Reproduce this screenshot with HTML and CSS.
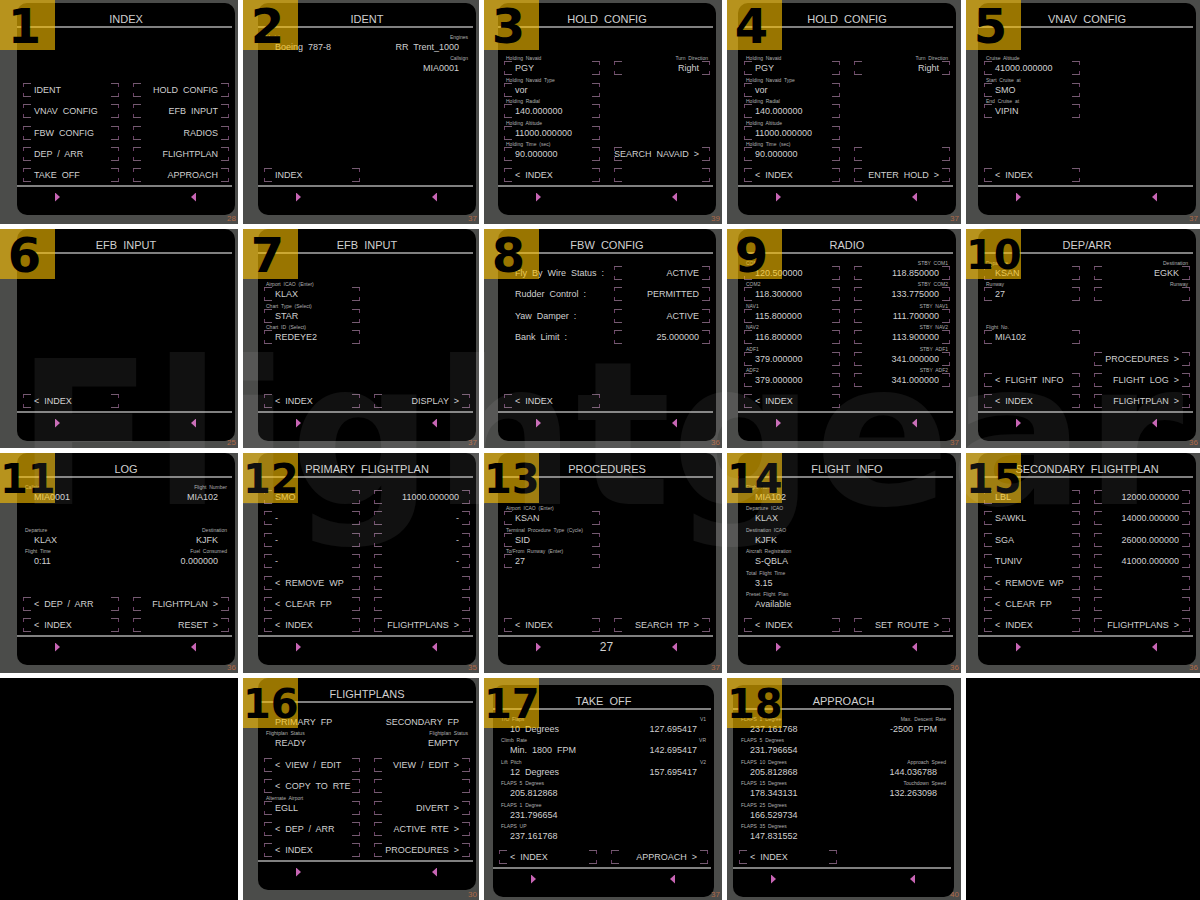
FILE: index.html
```html
<!DOCTYPE html>
<html lang="en">
<head>
<meta charset="utf-8">
<meta name="viewport" content="width=device-width, initial-scale=1">
<title>Flight computer pages</title>
<link rel="stylesheet" href="styles.css">
</head>
<body>
<main class="sheet">

<section class="tile"><span class="badge">1</span><div class="screen"><h2 class="title">INDEX</h2><div class="rows">
<button class="key r3">IDENT</button><button class="key right r3">HOLD  CONFIG</button>
<button class="key r4">VNAV  CONFIG</button><button class="key right r4">EFB  INPUT</button>
<button class="key r5">FBW  CONFIG</button><button class="key right r5">RADIOS</button>
<button class="key r6">DEP  /  ARR</button><button class="key right r6">FLIGHTPLAN</button>
<button class="key r7">TAKE  OFF</button><button class="key right r7">APPROACH</button>
</div><div class="foot"><i class="next"></i><span></span><i class="prev"></i></div></div><span class="rate">28</span></section>

<section class="tile"><span class="badge">2</span><div class="screen"><h2 class="title">IDENT</h2><div class="rows">
<p class="cell r1"><small>Model</small>Boeing  787-8</p><p class="cell right r1"><small>Engines</small>RR  Trent_1000</p>
<p class="cell right r2"><small>Callsign</small>MIA0001</p>
<button class="key r7">INDEX</button>
</div><div class="foot"><i class="next"></i><span></span><i class="prev"></i></div></div><span class="rate">37</span></section>

<section class="tile"><span class="badge">3</span><div class="screen"><h2 class="title">HOLD  CONFIG</h2><div class="rows">
<button class="key r2"><small>Holding  Navaid</small>PGY</button><button class="key right r2"><small>Turn  Direction</small>Right</button>
<button class="key r3"><small>Holding  Navaid  Type</small>vor</button>
<button class="key r4"><small>Holding  Radial</small>140.000000</button>
<button class="key r5"><small>Holding  Altitude</small>11000.000000</button>
<button class="key r6"><small>Holding  Time  (sec)</small>90.000000</button><button class="key right r6">SEARCH  NAVAID  &gt;</button>
<button class="key r7">&lt;  INDEX</button><span class="key right r7"></span>
</div><div class="foot"><i class="next"></i><span></span><i class="prev"></i></div></div><span class="rate">39</span></section>

<section class="tile"><span class="badge">4</span><div class="screen"><h2 class="title">HOLD  CONFIG</h2><div class="rows">
<button class="key r2"><small>Holding  Navaid</small>PGY</button><button class="key right r2"><small>Turn  Direction</small>Right</button>
<button class="key r3"><small>Holding  Navaid  Type</small>vor</button>
<button class="key r4"><small>Holding  Radial</small>140.000000</button>
<button class="key r5"><small>Holding  Altitude</small>11000.000000</button>
<button class="key r6"><small>Holding  Time  (sec)</small>90.000000</button><span class="key right r6"></span>
<button class="key r7">&lt;  INDEX</button><button class="key right r7">ENTER  HOLD  &gt;</button>
</div><div class="foot"><i class="next"></i><span></span><i class="prev"></i></div></div><span class="rate">37</span></section>

<section class="tile"><span class="badge">5</span><div class="screen"><h2 class="title">VNAV  CONFIG</h2><div class="rows">
<button class="key r2"><small>Cruise  Altitude</small>41000.000000</button>
<button class="key r3"><small>Start  Cruise  at</small>SMO</button>
<button class="key r4"><small>End  Cruise  at</small>VIPIN</button>
<button class="key r7">&lt;  INDEX</button>
</div><div class="foot"><i class="next"></i><span></span><i class="prev"></i></div></div><span class="rate">37</span></section>

<section class="tile"><span class="badge">6</span><div class="screen"><h2 class="title">EFB  INPUT</h2><div class="rows">
<button class="key r7">&lt;  INDEX</button>
</div><div class="foot"><i class="next"></i><span></span><i class="prev"></i></div></div><span class="rate">25</span></section>

<section class="tile"><span class="badge">7</span><div class="screen"><h2 class="title">EFB  INPUT</h2><div class="rows">
<button class="key r2"><small>Airport  ICAO  (Enter)</small>KLAX</button>
<button class="key r3"><small>Chart  Type  (Select)</small>STAR</button>
<button class="key r4"><small>Chart  ID  (Select)</small>REDEYE2</button>
<button class="key r7">&lt;  INDEX</button><button class="key right r7">DISPLAY  &gt;</button>
</div><div class="foot"><i class="next"></i><span></span><i class="prev"></i></div></div><span class="rate">37</span></section>

<section class="tile"><span class="badge">8</span><div class="screen"><h2 class="title">FBW  CONFIG</h2><div class="rows">
<p class="cell r1">Fly  By  Wire  Status  :</p><button class="key right r1">ACTIVE</button>
<p class="cell r2">Rudder  Control  :</p><button class="key right r2">PERMITTED</button>
<p class="cell r3">Yaw  Damper  :</p><button class="key right r3">ACTIVE</button>
<p class="cell r4">Bank  Limit  :</p><button class="key right r4">25.000000</button>
<button class="key r7">&lt;  INDEX</button>
</div><div class="foot"><i class="next"></i><span></span><i class="prev"></i></div></div><span class="rate">36</span></section>

<section class="tile"><span class="badge">9</span><div class="screen"><h2 class="title">RADIO</h2><div class="rows">
<button class="key r1"><small>COM1</small>120.500000</button><button class="key right r1"><small>STBY  COM1</small>118.850000</button>
<button class="key r2"><small>COM2</small>118.300000</button><button class="key right r2"><small>STBY  COM2</small>133.775000</button>
<button class="key r3"><small>NAV1</small>115.800000</button><button class="key right r3"><small>STBY  NAV1</small>111.700000</button>
<button class="key r4"><small>NAV2</small>116.800000</button><button class="key right r4"><small>STBY  NAV2</small>113.900000</button>
<button class="key r5"><small>ADF1</small>379.000000</button><button class="key right r5"><small>STBY  ADF1</small>341.000000</button>
<button class="key r6"><small>ADF2</small>379.000000</button><button class="key right r6"><small>STBY  ADF2</small>341.000000</button>
<button class="key r7">&lt;  INDEX</button>
</div><div class="foot"><i class="next"></i><span></span><i class="prev"></i></div></div><span class="rate">37</span></section>

<section class="tile"><span class="badge two">10</span><div class="screen"><h2 class="title">DEP/ARR</h2><div class="rows">
<button class="key r1"><small>Departure</small>KSAN</button><button class="key right r1"><small>Destination</small>EGKK</button>
<button class="key r2"><small>Runway</small>27</button><button class="key right r2"><small>Runway</small></button>
<button class="key r4"><small>Flight  No.</small>MIA102</button>
<button class="key right r5">PROCEDURES  &gt;</button>
<button class="key r6">&lt;  FLIGHT  INFO</button><button class="key right r6">FLIGHT  LOG  &gt;</button>
<button class="key r7">&lt;  INDEX</button><button class="key right r7">FLIGHTPLAN  &gt;</button>
</div><div class="foot"><i class="next"></i><span></span><i class="prev"></i></div></div><span class="rate">36</span></section>

<section class="tile"><span class="badge two">11</span><div class="screen"><h2 class="title">LOG</h2><div class="rows">
<p class="cell r1"><small>Callsign</small>MIA0001</p><p class="cell right r1"><small>Flight  Number</small>MIA102</p>
<p class="cell r3"><small>Departure</small>KLAX</p><p class="cell right r3"><small>Destination</small>KJFK</p>
<p class="cell r4"><small>Flight  Time</small>0:11</p><p class="cell right r4"><small>Fuel  Consumed</small>0.000000</p>
<button class="key r6">&lt;  DEP  /  ARR</button><button class="key right r6">FLIGHTPLAN  &gt;</button>
<button class="key r7">&lt;  INDEX</button><button class="key right r7">RESET  &gt;</button>
</div><div class="foot"><i class="next"></i><span></span><i class="prev"></i></div></div><span class="rate">36</span></section>

<section class="tile"><span class="badge two">12</span><div class="screen"><h2 class="title">PRIMARY  FLIGHTPLAN</h2><div class="rows">
<button class="key r1">SMO</button><button class="key right r1">11000.000000</button>
<button class="key r2">-</button><button class="key right r2">-</button>
<button class="key r3">-</button><button class="key right r3">-</button>
<button class="key r4">-</button><button class="key right r4">-</button>
<button class="key r5">&lt;  REMOVE  WP</button><span class="key right r5"></span>
<button class="key r6">&lt;  CLEAR  FP</button><span class="key right r6"></span>
<button class="key r7">&lt;  INDEX</button><button class="key right r7">FLIGHTPLANS  &gt;</button>
</div><div class="foot"><i class="next"></i><span></span><i class="prev"></i></div></div><span class="rate">35</span></section>

<section class="tile"><span class="badge two">13</span><div class="screen"><h2 class="title">PROCEDURES</h2><div class="rows">
<button class="key r2"><small>Airport  ICAO  (Enter)</small>KSAN</button>
<button class="key r3"><small>Terminal  Procedure  Type  (Cycle)</small>SID</button>
<button class="key r4"><small>To/From  Runway  (Enter)</small>27</button>
<button class="key r7">&lt;  INDEX</button><button class="key right r7">SEARCH  TP  &gt;</button>
</div><div class="foot"><i class="next"></i><span>27</span><i class="prev"></i></div></div><span class="rate">37</span></section>

<section class="tile"><span class="badge two">14</span><div class="screen"><h2 class="title">FLIGHT  INFO</h2><div class="rows">
<p class="cell r1"><small>Flight  Number</small>MIA102</p>
<p class="cell r2"><small>Departure  ICAO</small>KLAX</p>
<p class="cell r3"><small>Destination  ICAO</small>KJFK</p>
<p class="cell r4"><small>Aircraft  Registration</small>S-QBLA</p>
<p class="cell r5"><small>Total  Flight  Time</small>3.15</p>
<p class="cell r6"><small>Preset  Flight  Plan</small>Available</p>
<button class="key r7">&lt;  INDEX</button><button class="key right r7">SET  ROUTE  &gt;</button>
</div><div class="foot"><i class="next"></i><span></span><i class="prev"></i></div></div><span class="rate">36</span></section>

<section class="tile"><span class="badge two">15</span><div class="screen"><h2 class="title">SECONDARY  FLIGHTPLAN</h2><div class="rows">
<button class="key r1">LBL</button><button class="key right r1">12000.000000</button>
<button class="key r2">SAWKL</button><button class="key right r2">14000.000000</button>
<button class="key r3">SGA</button><button class="key right r3">26000.000000</button>
<button class="key r4">TUNIV</button><button class="key right r4">41000.000000</button>
<button class="key r5">&lt;  REMOVE  WP</button><span class="key right r5"></span>
<button class="key r6">&lt;  CLEAR  FP</button><span class="key right r6"></span>
<button class="key r7">&lt;  INDEX</button><button class="key right r7">FLIGHTPLANS  &gt;</button>
</div><div class="foot"><i class="next"></i><span></span><i class="prev"></i></div></div><span class="rate">36</span></section>

<div class="blank"></div>

<section class="tile"><span class="badge two">16</span><div class="screen"><h2 class="title">FLIGHTPLANS</h2><div class="rows">
<p class="cell r1">PRIMARY  FP</p><p class="cell right r1">SECONDARY  FP</p>
<p class="cell r2"><small>Flightplan  Status</small>READY</p><p class="cell right r2"><small>Flightplan  Status</small>EMPTY</p>
<button class="key r3">&lt;  VIEW  /  EDIT</button><button class="key right r3">VIEW  /  EDIT  &gt;</button>
<button class="key r4">&lt;  COPY  TO  RTE</button><span class="key right r4"></span>
<button class="key r5"><small>Alternate  Airport</small>EGLL</button><button class="key right r5">DIVERT  &gt;</button>
<button class="key r6">&lt;  DEP  /  ARR</button><button class="key right r6">ACTIVE  RTE  &gt;</button>
<button class="key r7">&lt;  INDEX</button><button class="key right r7">PROCEDURES  &gt;</button>
</div><div class="foot"><i class="next"></i><span></span><i class="prev"></i></div></div><span class="rate">30</span></section>

<section class="tile takeoff"><span class="badge two">17</span><div class="screen"><h2 class="title">TAKE  OFF</h2><div class="rows">
<p class="cell r1"><small>T/O  Flaps</small>10  Degrees</p><p class="cell right r1"><small>V1</small>127.695417</p>
<p class="cell r2"><small>Climb  Rate</small>Min.  1800  FPM</p><p class="cell right r2"><small>VR</small>142.695417</p>
<p class="cell r3"><small>Lift  Pitch</small>12  Degrees</p><p class="cell right r3"><small>V2</small>157.695417</p>
<p class="cell r4"><small>FLAPS  5  Degrees</small>205.812868</p>
<p class="cell r5"><small>FLAPS  1  Degree</small>231.796654</p>
<p class="cell r6"><small>FLAPS  UP</small>237.161768</p>
<button class="key r7">&lt;  INDEX</button><button class="key right r7">APPROACH  &gt;</button>
</div><div class="foot"><i class="next"></i><span></span><i class="prev"></i></div></div><span class="rate">37</span></section>

<section class="tile approach"><span class="badge two">18</span><div class="screen"><h2 class="title">APPROACH</h2><div class="rows">
<p class="cell r1"><small>FLAPS  1  Degree</small>237.161768</p><p class="cell right r1"><small>Max.  Descent  Rate</small>-2500  FPM</p>
<p class="cell r2"><small>FLAPS  5  Degrees</small>231.796654</p>
<p class="cell r3"><small>FLAPS  10  Degrees</small>205.812868</p><p class="cell right r3"><small>Approach  Speed</small>144.036788</p>
<p class="cell r4"><small>FLAPS  15  Degrees</small>178.343131</p><p class="cell right r4"><small>Touchdown  Speed</small>132.263098</p>
<p class="cell r5"><small>FLAPS  25  Degrees</small>166.529734</p>
<p class="cell r6"><small>FLAPS  35  Degrees</small>147.831552</p>
<button class="key r7">&lt;  INDEX</button>
</div><div class="foot"><i class="next"></i><span></span><i class="prev"></i></div></div><span class="rate">40</span></section>

<div class="blank"></div>

<div class="watermark">Flightgear</div>
</main>
</body>
</html>
```

FILE: styles.css
```css
* { box-sizing: border-box; }

body {
  margin: 0;
  background: #fff;
  color: #d0d0d0;
  font-family: "Liberation Sans", Arial, sans-serif;
}

.sheet {
  position: relative;
  display: grid;
  grid-template-columns: 238fr 236fr 238fr 234fr 234fr;
  grid-template-rows: 224fr 219fr 220fr 222fr;
  gap: 5px;
  min-height: 100vh;
  overflow: hidden;
}

.tile {
  position: relative;
  display: flex;
  flex-direction: column;
  justify-content: flex-end;
  padding: 0 3px 8px 17px;
  background: #4b4c4a;
  overflow: hidden;
}

.tile:nth-child(5n+2) { padding-left: 15px; }
.tile:nth-child(5n+3) { padding-left: 14px; padding-right: 6px; }
.tile:nth-child(5n+4) { padding-left: 11px; padding-right: 5px; }
.tile:nth-child(5n) { padding-left: 12px; padding-right: 4px; }
.tile:nth-child(-n+5) { padding-bottom: 9px; }
.tile:nth-child(n+6):nth-child(-n+10) { padding-bottom: 7px; }
.tile:nth-child(17) { padding-bottom: 10px; }
.tile.takeoff:nth-child(n) { padding: 0 8px 3px 9px; }
.tile.approach:nth-child(n) { padding: 0 7px 3px 6px; }

.blank { background: #000; }

.screen {
  display: flex;
  flex-direction: column;
  background: #000;
  border-radius: 10px;
}

.title {
  height: 25px;
  margin: 0 3px 0 0;
  border-bottom: 2px solid #808080;
  padding: 6px 0 0 3px;
  font-size: 11px;
  font-weight: 400;
  line-height: 20px;
  text-align: center;
  white-space: pre;
}

.rows {
  display: grid;
  grid-template-columns: 1fr 1fr;
  grid-template-rows: repeat(6, 1fr) 20px;
  column-gap: 14px;
  align-items: center;
  height: 157px;
  padding: 8px 6px 0;
}

.cell, .key {
  position: relative;
  grid-column: 1;
  min-width: 0;
  height: 14px;
  margin: 0;
  border: 0;
  padding: 0 11px;
  background: none;
  color: inherit;
  font: 9px/14px "Liberation Sans", Arial, sans-serif;
  text-align: left;
  white-space: pre;
}

.right {
  grid-column: 2;
  display: flex;
  justify-content: flex-end;
}

.r1 { grid-row: 1; }
.r2 { grid-row: 2; }
.r3 { grid-row: 3; }
.r4 { grid-row: 4; }
.r5 { grid-row: 5; }
.r6 { grid-row: 6; }
.r7 { grid-row: 7; }

/* four corner brackets around a line-select field */
.key {
  --h: linear-gradient(#755b71, #755b71);
  --v: linear-gradient(#6b3f66, #6b3f66);
  background:
    var(--h) 0 0 / 8px 1px no-repeat,
    var(--h) 100% 0 / 8px 1px no-repeat,
    var(--h) 0 100% / 8px 1px no-repeat,
    var(--h) 100% 100% / 8px 1px no-repeat,
    var(--v) 0 0 / 1px 4px no-repeat,
    var(--v) 100% 0 / 1px 4px no-repeat,
    var(--v) 0 100% / 1px 4px no-repeat,
    var(--v) 100% 100% / 1px 4px no-repeat;
}

small {
  position: absolute;
  top: -6px;
  left: 2px;
  color: #b0b0b0;
  font-size: 5px;
  line-height: 6px;
}

.right small {
  left: auto;
  right: 2px;
}

.foot {
  display: grid;
  grid-template-columns: 1fr 1fr 1fr;
  align-items: center;
  height: 30px;
  margin-right: 3px;
  border-top: 2px solid #808080;
  padding: 0 36px 8px 38px;
  font-size: 12px;
  text-align: center;
}

.next, .prev {
  width: 5px;
  height: 9px;
  background: #c765b4;
}

.next { clip-path: polygon(0 0, 100% 50%, 0 100%); }

.prev {
  justify-self: end;
  clip-path: polygon(100% 0, 0 50%, 100% 100%);
}

.rate {
  position: absolute;
  right: 2px;
  bottom: 1px;
  color: #b06a48;
  font-size: 8px;
  line-height: 9px;
}

.badge {
  position: absolute;
  z-index: 1;
  top: 0;
  left: 0;
  width: 55px;
  height: 50px;
  padding-right: 6px;
  background: rgba(255, 195, 0, .6);
  color: #000;
  font: bold 48px/52px "DejaVu Sans", sans-serif;
  text-align: center;
}

.badge.two {
  padding: 0;
  font-size: 40px;
}

.watermark {
  position: absolute;
  inset: 0 0 30px;
  z-index: 2;
  display: grid;
  place-items: center;
  color: rgba(255, 255, 255, .067);
  font: bold 200px/1 "DejaVu Sans", sans-serif;
  pointer-events: none;
}
```
